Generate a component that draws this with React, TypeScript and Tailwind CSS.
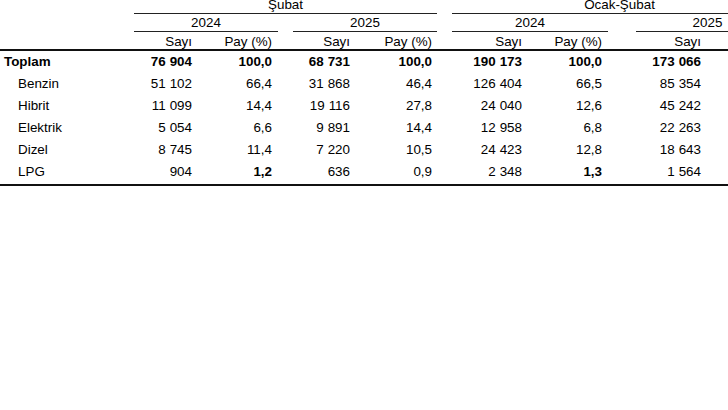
const cols =
  "grid grid-cols-[134px_64px_80px_15px_63px_81px_15px_76px_80px_28px_71px_80px]";

type Row = { label: string; total?: boolean; cells: string[]; bold?: number[] };

const rows: Row[] = [
  { label: "Toplam", total: true, cells: ["76 904", "100,0", "68 731", "100,0", "190 173", "100,0", "173 066", "100,0"] },
  { label: "Benzin", cells: ["51 102", "66,4", "31 868", "46,4", "126 404", "66,5", "85 354", "49,3"] },
  { label: "Hibrit", cells: ["11 099", "14,4", "19 116", "27,8", "24 040", "12,6", "45 242", "26,1"] },
  { label: "Elektrik", cells: ["5 054", "6,6", "9 891", "14,4", "12 958", "6,8", "22 263", "12,9"] },
  { label: "Dizel", cells: ["8 745", "11,4", "7 220", "10,5", "24 423", "12,8", "18 643", "10,8"] },
  { label: "LPG", cells: ["904", "1,2", "636", "0,9", "2 348", "1,3", "1 564", "0,9"], bold: [1, 5] },
];

// digit groups are separated by a small fixed gap
const Num = ({ v }: { v: string }) => {
  const parts = v.split(" ");
  return (
    <>
      {parts.map((p, i) => (
        <span key={i}>
          {i > 0 && <span className="inline-block w-[4px]" />}
          {p}
        </span>
      ))}
    </>
  );
};

const App = () => {
  return (
    <div className="w-[728px] h-[410px] overflow-hidden bg-white text-black text-[13.4px] font-['Liberation_Sans',Arial,sans-serif]">
      <div className="w-[789px]">
        {/* period header */}
        <div className={cols}>
          <div className="h-[14px]" />
          <div className="col-span-5 h-[14px] border-b border-[#222] text-center leading-[10px]">Şubat</div>
          <div />
          <div className="col-span-5 h-[14px] border-b border-[#222] text-center leading-[10px]">Ocak-Şubat</div>
        </div>

        {/* year header */}
        <div className={cols}>
          <div className="h-[18px]" />
          <div className="col-span-2 h-[18px] border-b border-[#222] text-center leading-[17px]">2024</div>
          <div />
          <div className="col-span-2 h-[18px] border-b border-[#222] text-center leading-[17px]">2025</div>
          <div />
          <div className="col-span-2 h-[18px] border-b border-[#222] text-center leading-[17px]">2024</div>
          <div />
          <div className="col-span-2 h-[18px] border-b border-[#222] text-center leading-[17px] pr-[8px]">2025</div>
        </div>

        {/* column header */}
        <div className={`${cols} h-[19px] border-b-2 border-[#111] leading-[19px]`}>
          <div />
          <div className="text-right pr-[6px]">Sayı</div>
          <div className="text-right pr-[6px]">Pay (%)</div>
          <div />
          <div className="text-right pr-[6px]">Sayı</div>
          <div className="text-right pr-[5px]">Pay (%)</div>
          <div />
          <div className="text-right pr-[6px]">Sayı</div>
          <div className="text-right pr-[6px]">Pay (%)</div>
          <div />
          <div className="text-right pr-[6px]">Sayı</div>
          <div className="text-right pr-[6px]">Pay (%)</div>
        </div>

        {/* body */}
        <div className="border-b-2 border-[#111] pb-[1px]">
          {rows.map((r) => (
            <div key={r.label} className={`${cols} h-[22px] leading-[22px] ${r.total ? "font-bold" : ""}`}>
              <div className={r.total ? "pl-[4px]" : "pl-[18px]"}>{r.label}</div>
              {r.cells.map((c, i) => {
                const pad = i === 3 ? "pr-[5px]" : "pr-[6px]";
                const b = r.bold?.includes(i) ? "font-bold" : "";
                const cell = (
                  <div key={i} className={`text-right ${pad} ${b}`}>
                    <Num v={c} />
                  </div>
                );
                if (i === 1 || i === 3 || i === 5) {
                  return [cell, <div key={`g${i}`} />];
                }
                return cell;
              })}
            </div>
          ))}
        </div>
      </div>
    </div>
  );
};

export default App;
